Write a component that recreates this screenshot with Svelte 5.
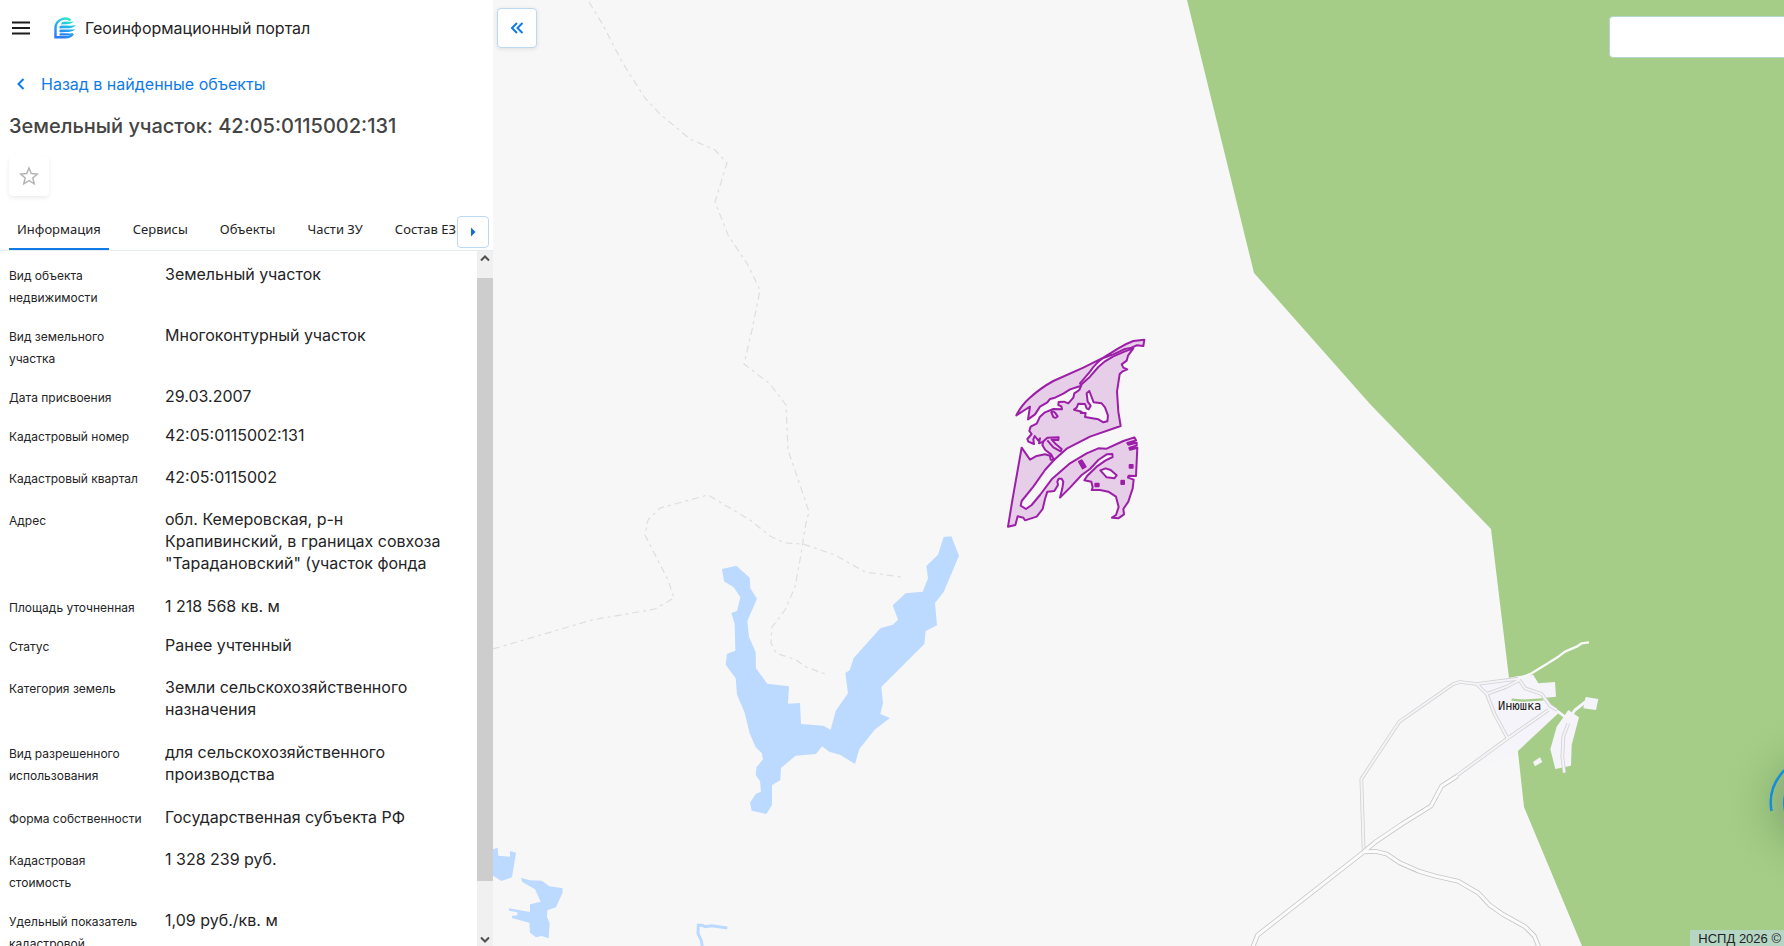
<script>
  const tabs = ['Информация', 'Сервисы', 'Объекты', 'Части ЗУ', 'Состав ЕЗП'];
  let active = $state(0);

  const rows = [
    { label: 'Вид объекта недвижимости', value: 'Земельный участок', gap: 'tight' },
    { label: 'Вид земельного участка', value: 'Многоконтурный участок', gap: 'tight' },
    { label: 'Дата присвоения', value: '29.03.2007', gap: 'tight' },
    { label: 'Кадастровый номер', value: '42:05:0115002:131', gap: 'normal' },
    { label: 'Кадастровый квартал', value: '42:05:0115002', gap: 'normal' },
    { label: 'Адрес', value: 'обл. Кемеровская, р-н Крапивинский, в границах совхоза "Тарадановский" (участок фонда', gap: 'wide' },
    { label: 'Площадь уточненная', value: '1 218 568 кв. м', gap: 'tight' },
    { label: 'Статус', value: 'Ранее учтенный', gap: 'normal' },
    { label: 'Категория земель', value: 'Земли сельскохозяйственного назначения', gap: 'wide' },
    { label: 'Вид разрешенного использования', value: 'для сельскохозяйственного производства', gap: 'wide' },
    { label: 'Форма собственности', value: 'Государственная субъекта РФ', gap: 'normal' },
    { label: 'Кадастровая стоимость', value: '1 328 239 руб.', gap: 'tight' },
    { label: 'Удельный показатель кадастровой стоимости', value: '1,09 руб./кв. м', gap: 'tight' }
  ];
</script>

<div class="page">
  <aside class="panel">
    <header class="top">
      <button class="plain" aria-label="Меню">
        <svg width="18" height="14" viewBox="0 0 18 14"><path d="M0 1.500h18M0 7h18M0 12.500h18" stroke="#1c1c1e" stroke-width="2" /></svg>
      </button>
      <svg class="logo" width="22" height="22" viewBox="0 0 22 22" aria-hidden="true">
        <defs>
          <linearGradient id="brand" x1="0.7" y1="0" x2="0.3" y2="1">
            <stop offset="0" stop-color="#2fe3c8" />
            <stop offset="0.45" stop-color="#22b4f0" />
            <stop offset="1" stop-color="#2a7bf6" />
          </linearGradient>
        </defs>
        <path d="M16.500 3.200C11 -.4 2 2.500 1.500 10.500V20.200H11.500C15 20.200 17.500 18.800 19 16.800" fill="none" stroke="url(#brand)" stroke-width="2.400" />
        <path d="M8 5.200C12 3.600 16 5.800 19.500 4.300 18.500 7 15 7.200 7 7.500ZM5.500 9C12 7.800 17 9.600 21.500 8 20 11.500 15 11.200 5.500 11.400ZM5.500 12.800C12 11.800 17 13.400 21 12 19.500 15.200 14 15 5.500 15.200ZM5.500 16.500C11 15.700 15 17.200 19 16 17 18.800 12 18.400 5.500 18.500Z" fill="url(#brand)" />
      </svg>
      <span class="portal">Геоинформационный портал</span>
    </header>

    <a class="back" href="#results">
      <svg width="8" height="12" viewBox="0 0 8 12"><path d="M6.500 1L1.500 6l5 5" fill="none" stroke="#0f7be6" stroke-width="2" /></svg>
      <span>Назад в найденные объекты</span>
    </a>

    <h1>Земельный участок: 42:05:0115002:131</h1>

    <button class="star" aria-label="В избранное">
      <svg width="20" height="20" viewBox="0 0 20 20"><path d="M10 2l2.300 5.500 6 .5-4.500 3.900 1.400 5.900L10 14.700l-5.200 3.100 1.400-5.900L1.700 8l6-.5Z" fill="none" stroke="#b4b4b4" stroke-width="1.500" /></svg>
    </button>

    <div class="tabbar">
      <div class="tabs" role="tablist">
        {#each tabs as tab, i}
          <button role="tab" class:active={active === i} aria-selected={active === i} onclick={() => (active = i)}>{tab}</button>
        {/each}
      </div>
      <button class="next" aria-label="Следующие вкладки">
        <svg width="6" height="10" viewBox="0 0 6 10"><path d="M1 0.500L5.500 5 1 9.500Z" fill="#0f6fd6" /></svg>
      </button>
    </div>

    <div class="content">
      <dl>
        {#each rows as row}
          <div class="row {row.gap}">
            <dt>{row.label}</dt>
            <dd>{row.value}</dd>
          </div>
        {/each}
      </dl>
      <div class="scroll" aria-hidden="true">
        <span class="arrow"><svg width="10" height="7" viewBox="0 0 10 7"><path d="M1 5.500L5 1.500l4 4" fill="none" stroke="#505050" stroke-width="2" /></svg></span>
        <span class="thumb"></span>
        <span class="rest"></span>
        <span class="arrow low"><svg width="10" height="7" viewBox="0 0 10 7"><path d="M1 1.500l4 4 4-4" fill="none" stroke="#505050" stroke-width="2" /></svg></span>
      </div>
    </div>
  </aside>

  <main class="map">
    <svg class="canvas" viewBox="493 0 1291 946" preserveAspectRatio="xMinYMin slice" role="img" aria-label="Карта">
      <defs>
        <linearGradient id="town" gradientUnits="userSpaceOnUse" x1="670" y1="290" x2="800" y2="190">
          <stop offset="0" stop-color="#f7f7f7" />
          <stop offset="1" stop-color="#f5f4fa" />
        </linearGradient>
      </defs>
      <rect x="493" width="1291" height="946" fill="#f7f7f7" />
      <path d="M1187 0L1254 273 1370 404 1491 529 1509 678 1518 752 1524 807 1582 946H1784V0Z" fill="#a5cd87" />

      <!-- field tracks -->
      <g fill="none" stroke="#dedede" stroke-width="1.200" stroke-dasharray="7 4 3 4">
        <path d="M589 2L603 25 622 62 645 98 660 114 690 139 715 150 727 163 715 202 728 235 748 265 760 290 752 330 744 364 770 384 786 405 788 450 800 485 809 512 806 523 800 560 795 587 785 610 772 627 771 643 776 653 796 660 806 667 828 675" />
        <path d="M493 649L592 620 655 609 674 598 668 580 645 535 648 520 660 508 708 495 750 520 770 536 785 543 803 544 835 555 865 572 901 577" />
      </g>

      <!-- water -->
      <g fill="#bcdaff">
        <path transform="translate(700 520) scale(.33333)" d="M66 147L109 137 149 173 151 205 171 236 142 303 147 350 167 397 168 445 202 491 267 499 264 551 300 549 303 612 370 617 392 629 407 573 444 520 436 459 449 451 461 414 541 325 578 314 594 299 578 256 617 220 668 215 684 175 679 138 714 104 731 51 754 49 777 107 731 216 705 249 711 316 677 333 673 372 544 501 549 550 541 582 570 594 524 629 478 687 465 732 420 704 388 695 366 679 348 702 287 707 243 744 241 780 216 796V855L199 882 155 872 150 848 167 822 183 815 180 784 167 765 170 741 189 718 185 699 167 682 149 640 133 575 111 524 107 475 77 434 81 401 106 392 104 312 94 279 111 273 121 232 101 202 72 184Z" />
        <path transform="translate(490 830) scale(.33333)" d="M9 58L23 53 25 77 60 80V63L78 68 66 142 34 153 9 137ZM93 143L120 151 155 152 178 169 218 175 217 190 198 232 172 241 171 260 179 280 176 325 155 318 138 322 120 308 118 278 65 264 67 257 82 256V247L57 242V235L120 246V223L152 215 135 178 97 156Z" />
      </g>
      <path transform="translate(490 830) scale(.33333)" d="M637 350L634 332 624 310 625 286 637 286 645 290 665 287 712 294" fill="none" stroke="#bcdaff" stroke-width="9" />

      <!-- village -->
      <g transform="translate(1240 660) scale(.33333)" stroke-linejoin="round">
        <path d="M710 72L835 48 880 45 895 70 945 66 948 110 910 114 955 160 835 272 820 290 655 350 720 270 800 235 745 105Z" fill="url(#town)" />
        <path d="M985 150L1017 172 995 255 993 317 946 327 931 268 950 200Z" fill="#f5f4fa" />
        <path d="M1037 111L1075 117 1068 150 1030 145ZM879 306L900 292 907 306 885 319Z" fill="#f5f4fa" />
        <path d="M815 119L850 122 910 118" fill="none" stroke="#a5cd87" stroke-width="7" />
        <path d="M371 572L364 357 478 185 640 72 660 66 710 72 835 56M710 72L740 102 765 165 803 235M740 102L800 80 838 60 855 85 905 102 930 137 950 150M985 190L970 230 967 290 973 338M803 235L925 150M650 347L803 235" fill="none" stroke="#d3d3d6" stroke-width="11" />
        <path d="M371 572L364 357 478 185 640 72 660 66 710 72 835 56M710 72L740 102 765 165 803 235M740 102L800 80 838 60 855 85 905 102 930 137 950 150M985 190L970 230 967 290 973 338M803 235L925 150M650 347L803 235" fill="none" stroke="#f4f4f6" stroke-width="6" />
        <path d="M835 56L875 40 920 12 955 -10 975 -25 1010 -40 1025 -50 1047 -53" fill="none" stroke="#f8f8f8" stroke-width="7" />
        <path d="M950 152L985 178 1005 150 1040 123 1053 118" fill="none" stroke="#f5f4fa" stroke-width="9" />
        <path d="M38 862L53 825 371 576 405 547 485 493 573 438 605 378 653 347M371 576L405 574 440 582 480 609 535 633 585 648 655 664 715 699 750 736 790 764 855 800 883 828 898 865" fill="none" stroke="#c6c6c6" stroke-width="14" />
        <path d="M38 862L53 825 371 576 405 547 485 493 573 438 605 378 653 347M371 576L405 574 440 582 480 609 535 633 585 648 655 664 715 699 750 736 790 764 855 800 883 828 898 865" fill="none" stroke="#fbfbfb" stroke-width="9" />
      </g>
      <text x="1498" y="710">Инюшка</text>

      <!-- parcel contours -->
      <g transform="translate(990 325) scale(.33333)" fill="#e6cde8" stroke="#9c1fa8" stroke-width="6" stroke-linejoin="round">
        <path d="M463 44L460 63 440 61Q425 70 405 72L370 88 340 99Q318 113 300 140L270 175 275 182 262 186 240 193 220 206 195 218 180 222 172 232 150 245 135 268 114 283 120 245 104 255 79 271Q95 240 118 220 150 190 190 168L280 128 340 98 385 70Q410 55 430 48Z" />
        <path d="M430 70L405 79 370 94 345 109 325 126 300 155 275 178 268 195 253 205 250 218 235 235 222 230 206 231 205 240 214 244 216 253 190 252 165 262 150 275 140 296 122 305 118 318 125 327 112 342 115 350 132 357 130 343 134 333 145 347 150 340 147 355 160 350 157 360 166 375 183 388 192 405 230 371 300 335 392 303 385 260 381 200 389 147 398 139 412 133 400 128 395 118 410 107 414 92Z" />
        <path d="M95 368L120 404 140 393 165 388 180 392 182 404 192 405 165 435 130 485 95 528 92 542 108 552 125 540 150 510 185 463 240 415 290 385 325 370 350 371 400 348 433 337 438 346 412 354 415 359 440 353 440 362 418 369 420 374 442 368 438 453 416 452 414 458 431 464 428 490 415 530 400 552 402 568 385 580 366 578 378 570 386 546 378 515 355 500 330 495 305 495 308 487 304 470 283 466 292 452 320 425 347 406 368 396 367 387 350 388 325 405 300 432 275 450 240 488 210 518 217 490 220 470 215 461 206 461 202 470 204 480 193 498 172 500 165 522 158 552 140 575 105 586 100 578 83 574 76 600 54 605 68 520Z" />
        <g fill="#f7f7f7">
          <path d="M298 198L290 205 293 230 302 242 296 253 290 250 285 237 265 236 260 248 252 254 275 260 272 264 287 264 285 276 325 283 340 292 352 289 354 272 345 247 335 235 311 232Z" />
          <path d="M331 436L347 430 362 435 380 451 373 460 350 457Z" />
        </g>
        <path d="M184 262Q188 256 195 263L203 274Q198 282 190 276ZM158 351L172 338 206 337 205 345 185 344 198 358 215 372 212 379 190 367 172 346" />
        <path d="M267 410L275 406 287 425 278 430ZM419 420H428V428H419ZM394 467H402V477H394ZM316 476H326V484H316Z" fill="#9c1fa8" />
        <path d="M414 356L436 350M420 369L438 364" />
      </g>
    </svg>

    <button class="collapse" aria-label="Свернуть панель">
      <svg width="14" height="12" viewBox="0 0 14 12"><path d="M7 1L2 6l5 5M12.500 1l-5 5 5 5" fill="none" stroke="#0f7be6" stroke-width="2" /></svg>
    </button>
    <input class="search" type="text" aria-label="Поиск" />
    <svg class="spinner" width="110" height="220" viewBox="0 0 110 220" aria-hidden="true">
      <defs>
        <radialGradient id="glow" gradientUnits="userSpaceOnUse" cx="143" cy="110" r="100">
          <stop offset="0.300" stop-color="#5f8a50" stop-opacity="0.400" />
          <stop offset="0.600" stop-color="#6f9c5c" stop-opacity="0.150" />
          <stop offset="1" stop-color="#a5cd87" stop-opacity="0" />
        </radialGradient>
      </defs>
      <rect width="110" height="220" fill="url(#glow)" />
      <circle cx="143" cy="110" r="39" fill="none" stroke="#9aae8e" stroke-width="2" />
      <path d="M97.500 118A46 46 0 0 1 143 64" fill="none" stroke="#168be0" stroke-width="2.500" />
      <circle cx="143" cy="110" r="34" fill="#168be0" />
    </svg>
    <div class="credit">НСПД 2026 ©</div>
  </main>
</div>

<style>
  :global(body) {
    margin: 0;
    overflow: hidden;
  }
  .page {
    display: flex;
    height: 100vh;
    overflow: hidden;
    color: #242426;
    font-family: Inter, 'Liberation Sans', sans-serif;
  }
  button {
    font: inherit;
    color: inherit;
    border: 0;
    padding: 0;
    background: none;
  }
  .panel {
    display: flex;
    flex: none;
    flex-direction: column;
    width: 493px;
    background: #fff;
  }
  .top {
    display: flex;
    align-items: center;
    height: 56px;
    padding-left: 12px;
  }
  .plain {
    display: flex;
    margin-right: 24px;
  }
  .logo {
    margin-right: 9px;
  }
  .portal,
  .back {
    font-size: 16px;
    line-height: 24px;
  }
  .back {
    display: flex;
    align-items: center;
    gap: 16px;
    margin-top: 16px;
    padding-left: 17px;
    color: #0f7be6;
    text-decoration: none;
  }
  h1 {
    margin: 18px 0 0 9px;
    font-size: 20px;
    font-weight: 500;
    line-height: 24px;
    color: #444;
  }
  .star {
    display: grid;
    place-items: center;
    width: 40px;
    height: 40px;
    margin: 18px 0 0 9px;
    border-radius: 4px;
    box-shadow: 0 2px 4px #00000014;
  }
  .tabbar {
    display: flex;
    align-items: flex-end;
    height: 40px;
    margin-top: 14px;
    padding: 0 4px 0 9px;
    border-bottom: 1px solid #e4ebf1;
  }
  .tabs {
    display: flex;
    flex: 1;
    gap: 16px;
    min-width: 0;
    height: 40px;
    overflow: hidden;
  }
  .tabs button {
    flex: none;
    padding: 0 8px;
    font-family: 'Noto Sans', sans-serif;
    font-size: 13px;
    border-bottom: 2px solid transparent;
  }
  .tabs .active {
    border-bottom-color: #0f7be6;
  }
  .next {
    display: grid;
    flex: none;
    place-items: center;
    box-sizing: border-box;
    width: 32px;
    height: 32px;
    margin-bottom: 2px;
    border: 1px solid #bcd8f2;
    border-radius: 4px;
    background: #fff;
  }
  .content {
    display: flex;
    flex: 1;
    min-height: 0;
  }
  dl {
    flex: 1;
    margin: 0;
    padding: 12px 0 0 9px;
    overflow: hidden;
  }
  .row {
    display: grid;
    grid-template-columns: 136px 290px;
    column-gap: 20px;
  }
  .tight {
    padding-bottom: 17px;
  }
  .normal {
    padding-bottom: 20px;
  }
  .wide {
    padding-bottom: 21px;
  }
  dt,
  dd {
    margin: 0;
    line-height: 22px;
  }
  dt {
    padding-top: 2px;
    margin-bottom: -2px;
    font-size: 12px;
  }
  dd {
    font-size: 16px;
  }
  .scroll {
    display: flex;
    flex-direction: column;
    width: 16px;
    background: #f0f0f0;
  }
  .arrow {
    display: grid;
    place-items: start center;
    height: 23px;
    padding-top: 4px;
  }
  .low {
    height: 10px;
    padding-top: 3px;
  }
  .thumb {
    flex: 603;
    background: #cdcdcd;
  }
  .rest {
    flex: 52;
  }
  .map {
    position: relative;
    flex: 1;
    min-width: 0;
    overflow: hidden;
    background: #f7f7f7;
  }
  .canvas {
    display: block;
    width: 100%;
    height: 100%;
  }
  .canvas text {
    font-family: 'DejaVu Sans Mono', monospace;
    font-size: 12px;
    fill: #222;
    stroke: #f7f7fa;
    stroke-width: 1px;
    paint-order: stroke;
  }
  .collapse {
    position: absolute;
    top: 8px;
    left: 4px;
    display: grid;
    place-items: center;
    box-sizing: border-box;
    width: 40px;
    height: 40px;
    border: 1px solid #bcd8f2;
    border-radius: 4px;
    background: #fff;
    box-shadow: 0 1px 4px #0000001a;
  }
  .search {
    position: absolute;
    top: 16px;
    right: -20px;
    box-sizing: border-box;
    width: 195px;
    height: 42px;
    border: 1px solid #b5d6cc;
    border-radius: 4px;
    background: #fff;
  }
  .spinner {
    position: absolute;
    right: 0;
    bottom: 33px;
  }
  .credit {
    position: absolute;
    right: 0;
    bottom: 0;
    padding: 1px 3px 0 8px;
    font-family: 'Liberation Sans', Arial, sans-serif;
    font-size: 13px;
    line-height: 15px;
    color: #222;
    background: #b6d6c4;
  }
</style>
